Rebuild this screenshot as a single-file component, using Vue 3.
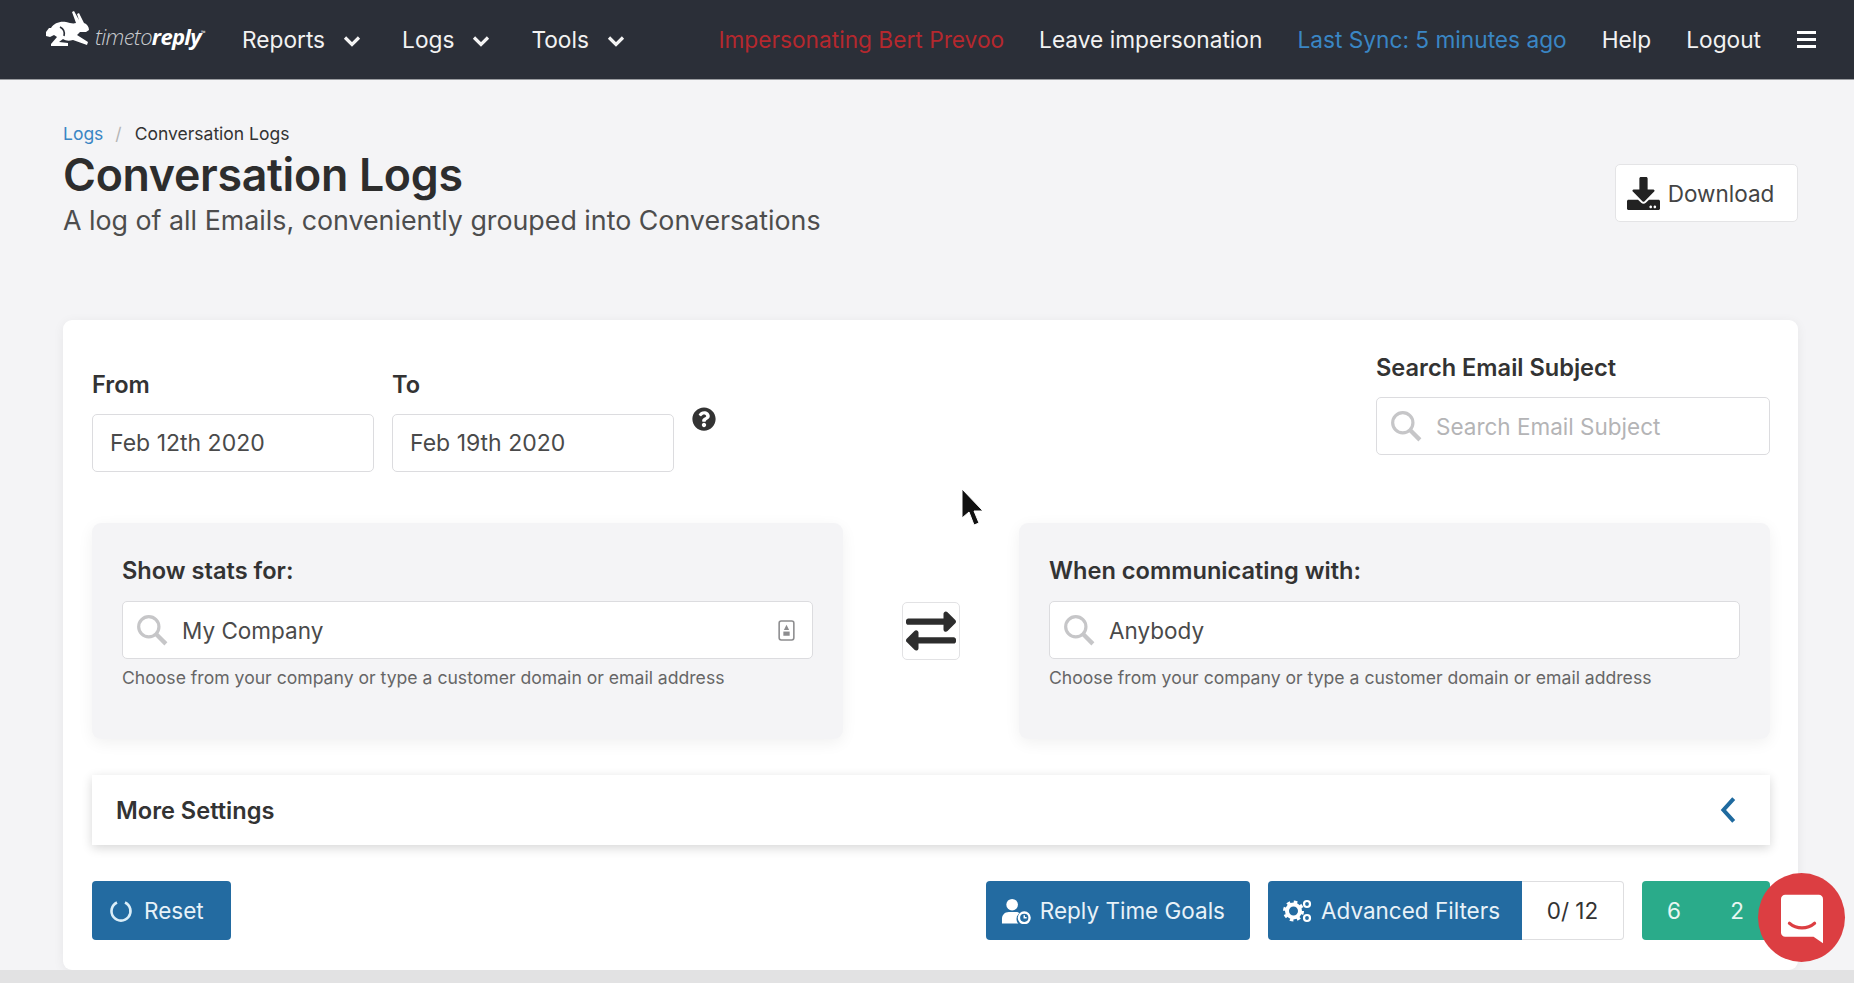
<template>
  <div class="page">
    <nav class="topbar">
      <a class="logo">
        <svg class="rabbit" viewBox="0 0 44 36">
          <path d="M0 21l3-4h2c3-5 9-7 15-6 4 1 7 2 10 1L26 1l2-1 5 9-2-6 2-1 5 10c3 1 5 4 5 7l-3 2h-6l-3 3 11 7-1 3-14-5c-4 1-7 1-10-1l-4 3 9 1v3H5v-2l6-7-3-2-4 2-4-1z" fill="#fff" />
          <path d="M14 16c4 2 5 5 4 9" fill="none" stroke="#2b2f38" stroke-width="1.600" />
        </svg>
        <span class="logo-text"><span class="thin">timeto</span><b>reply</b><sup>™</sup></span>
      </a>
      <ul class="menu">
        <li v-for="m in menus" :key="m">
          {{ m }}
          <svg class="chev" viewBox="0 0 18 12"><path d="M2 2.500l7 7 7-7" /></svg>
        </li>
      </ul>
      <div class="right-nav">
        <span class="imp">Impersonating Bert Prevoo</span>
        <span>Leave impersonation</span>
        <span class="sync">Last Sync: 5 minutes ago</span>
        <span>Help</span>
        <span>Logout</span>
        <span class="burger"><i></i><i></i><i></i></span>
      </div>
    </nav>

    <main class="content">
      <header class="head">
        <div>
          <div class="crumbs"><a>Logs</a><span class="sep">/</span><span>Conversation Logs</span></div>
          <h1>Conversation Logs</h1>
          <p class="sub">A log of all Emails, conveniently grouped into Conversations</p>
        </div>
        <button class="btn-download">
          <svg viewBox="0 0 512 512"><path d="M216 0h80c13.300 0 24 10.700 24 24v168h87.700c17.800 0 26.700 21.500 14.100 34.100L269.700 378.300c-7.500 7.500-19.800 7.500-27.300 0L90.100 226.100c-12.600-12.600-3.700-34.100 14.100-34.100H192V24c0-13.300 10.700-24 24-24zm296 376v112c0 13.300-10.700 24-24 24H24c-13.300 0-24-10.700-24-24V376c0-13.300 10.700-24 24-24h146.700l49 49c20.100 20.100 52.500 20.100 72.600 0l49-49H488c13.300 0 24 10.700 24 24zm-124 88c0-11-9-20-20-20s-20 9-20 20 9 20 20 20 20-9 20-20zm64 0c0-11-9-20-20-20s-20 9-20 20 9 20 20 20 20-9 20-20z" /></svg>
          Download
        </button>
      </header>

      <section class="card">
        <div class="filters">
          <div class="dates">
            <div class="field">
              <label>From</label>
              <div class="input date">Feb 12th 2020</div>
            </div>
            <div class="field">
              <label>To</label>
              <div class="input date">Feb 19th 2020</div>
            </div>
            <svg class="help" viewBox="0 0 512 512"><path d="M504 256c0 136.997-111.043 248-248 248S8 392.997 8 256C8 119.083 119.043 8 256 8s248 111.083 248 248zM262.655 90c-54.497 0-89.255 22.957-116.549 63.758-3.536 5.286-2.353 12.415 2.715 16.258l34.699 26.310c5.205 3.947 12.621 3.008 16.665-2.122 17.864-22.658 30.113-35.797 57.303-35.797 20.429 0 45.698 13.148 45.698 32.958 0 14.976-12.363 22.667-32.534 33.976C247.128 238.528 216 254.941 216 296v4c0 6.627 5.373 12 12 12h56c6.627 0 12-5.373 12-12v-1.333c0-28.462 83.186-29.647 83.186-106.667 0-58.002-60.165-102-116.531-102zM256 338c-25.365 0-46 20.635-46 46 0 25.364 20.635 46 46 46s46-20.636 46-46c0-25.365-20.635-46-46-46z" /></svg>
          </div>
          <div class="field subject">
            <label>Search Email Subject</label>
            <div class="input with-icon placeholder">
              <svg class="glass" viewBox="0 0 30 30"><circle cx="12" cy="12" r="9.500" /><path d="M19 19l9 9" /></svg>
              Search Email Subject
            </div>
          </div>
        </div>

        <div class="stats">
          <div class="box">
            <label>Show stats for:</label>
            <div class="input with-icon">
              <svg class="glass" viewBox="0 0 30 30"><circle cx="12" cy="12" r="9.500" /><path d="M19 19l9 9" /></svg>
              My Company
              <svg class="contact" viewBox="0 0 16 20">
                <rect x="1" y="1" width="14" height="18" rx="2" />
                <path d="M8 4.500l2.500 5h-5z" class="dot" />
                <rect x="5" y="11" width="6" height="4" class="dot" />
              </svg>
            </div>
            <p class="hint">Choose from your company or type a customer domain or email address</p>
          </div>
          <button class="swap">
            <svg viewBox="0 0 512 512"><path d="M0 168v-16c0-13.255 10.745-24 24-24h360V80c0-21.367 25.899-32.042 40.971-16.971l80 80c9.372 9.373 9.372 24.569 0 33.941l-80 80C409.956 271.982 384 261.456 384 240v-48H24c-13.255 0-24-10.745-24-24zm488 152H128v-48c0-21.314-25.862-32.080-40.971-16.971l-80 80c-9.372 9.373-9.372 24.569 0 33.941l80 80C102.057 463.997 128 453.437 128 432v-48h360c13.255 0 24-10.745 24-24v-16c0-13.255-10.745-24-24-24z" /></svg>
          </button>
          <div class="box">
            <label>When communicating with:</label>
            <div class="input with-icon">
              <svg class="glass" viewBox="0 0 30 30"><circle cx="12" cy="12" r="9.500" /><path d="M19 19l9 9" /></svg>
              Anybody
            </div>
            <p class="hint">Choose from your company or type a customer domain or email address</p>
          </div>
        </div>

        <div class="more">
          <span>More Settings</span>
          <svg viewBox="0 0 14 24"><path d="M12 2L3 12l9 10" /></svg>
        </div>

        <div class="actions">
          <button class="btn blue reset">
            <svg class="ico-reset" viewBox="0 0 24 24"><path d="M8 3.500a9.500 9.500 0 1 0 8 0" /></svg>
            Reset
          </button>
          <div class="actions-right">
            <button class="btn blue goals">
              <svg class="ico-goal" viewBox="0 0 32 26">
                <circle cx="11.500" cy="6.500" r="6" fill="#fff" />
                <path d="M1 26v-5c0-4 3-7 7-7h7c2 0 3 .5 4 1-2 2-3 4-3 6 0 2 .6 4 2 5z" fill="#fff" />
                <circle cx="24" cy="20" r="5.500" fill="none" stroke="#fff" stroke-width="2.500" />
                <path d="M24 17.500V20h2.500" fill="none" stroke="#fff" stroke-width="1.500" />
              </svg>
              Reply Time Goals
            </button>
            <div class="group">
              <button class="btn blue flat">
                <svg class="ico-gears" viewBox="0 0 30 26">
                  <circle cx="10.500" cy="13" r="6.500" fill="none" stroke="#fff" stroke-width="4" />
                  <circle cx="10.500" cy="13" r="9" fill="none" stroke="#fff" stroke-width="3" stroke-dasharray="3.500 3.570" />
                  <circle cx="24" cy="6" r="3" fill="none" stroke="#fff" stroke-width="2.200" />
                  <circle cx="24" cy="20" r="3" fill="none" stroke="#fff" stroke-width="2.200" />
                </svg>
                Advanced Filters
              </button>
              <div class="count">0/ 12</div>
            </div>
            <div class="green"><span>6</span><span>2</span></div>
          </div>
        </div>
      </section>
    </main>
    <div class="strip"></div>

    <!-- chat widget and the recorded mouse pointer lie over the page -->
    <div class="chat">
      <svg viewBox="0 0 40 46">
        <path d="M4 0h32a4 4 0 0 1 4 4v42l-9-6H4a4 4 0 0 1-4-4V4a4 4 0 0 1 4-4z" fill="#fff" />
        <path d="M8 27c7 6 17 6 24 0" fill="none" stroke="#dc3e42" stroke-width="3" stroke-linecap="round" />
      </svg>
    </div>
    <svg class="pointer" viewBox="0 0 24 40">
      <path d="M2 1v29l7-6 5 13 5-2-5-12h9z" fill="#111" stroke="#fff" stroke-width="1" />
    </svg>
  </div>
</template>

<script setup>
const menus = ['Reports', 'Logs', 'Tools']
</script>

<style>
html, body {
  margin: 0;
  height: 100%;
  overflow: hidden;
  background: #f4f4f6;
}
</style>

<style scoped>
.page {
  height: 983px;
  font-family: Inter, "Liberation Sans", sans-serif;
  color: #333;
  background: #f4f4f6;
  position: relative;
  overflow: hidden;
}
.topbar {
  height: 79px;
  background: #2b2f38;
  border-bottom: 1px solid #9a9ca0;
  display: flex;
  align-items: center;
  padding: 0 38px 0 46px;
  color: #f2f2f2;
  font-size: 22.700px;
}
.logo {
  display: flex;
  align-items: flex-start;
  align-self: flex-start;
  width: 196px;
  padding-top: 11px;
}
.rabbit {
  width: 44px;
  height: 36px;
  flex: none;
}
.logo-text {
  font-family: "Open Sans", sans-serif;
  font-style: italic;
  font-size: 22px;
  line-height: 26px;
  letter-spacing: -0.7px;
  margin-left: 5px;
  margin-top: 12px;
  color: #fff;
}
.logo-text .thin {
  font-weight: 300;
  color: #c9cbce;
}
.logo-text b {
  font-weight: 700;
}
.logo-text sup {
  font-size: 6px;
  line-height: 0;
  vertical-align: 10px;
  font-style: normal;
}
.menu {
  display: flex;
  list-style: none;
  margin: 0;
  padding: 0;
  gap: 41px;
}
.menu li {
  display: flex;
  align-items: center;
  gap: 18px;
}
.chev {
  width: 18px;
  height: 12px;
  margin-top: 3px;
}
.chev path {
  fill: none;
  stroke: #f4f4f4;
  stroke-width: 3.200;
}
.right-nav {
  margin-left: auto;
  display: flex;
  align-items: center;
  gap: 35px;
}
.imp {
  color: #b5282e;
}
.sync {
  color: #3a86c4;
}
.burger {
  display: flex;
  flex-direction: column;
  gap: 4px;
  width: 19px;
  margin-left: 1px;
}
.burger i {
  height: 3px;
  background: #fff;
}
.content {
  padding: 42px 56px 0 63px;
}
.head {
  display: flex;
  justify-content: space-between;
  align-items: flex-start;
  height: 198px;
}
.crumbs {
  font-size: 17.500px;
  line-height: 24px;
  display: flex;
}
.crumbs a {
  color: #3a86c4;
}
.sep {
  color: #b5b5b5;
  margin: 0 13px 0 12px;
}
h1 {
  margin: 3px 0 0;
  font-size: 44.700px;
  line-height: 52px;
  font-weight: 600;
  letter-spacing: -0.3px;
  color: #2d2d2d;
}
.sub {
  margin: 3px 0 0;
  font-size: 26.800px;
  line-height: 32px;
  color: #4d4d4d;
}
.btn-download {
  margin-top: 42px;
  width: 183px;
  height: 58px;
  padding-right: 18px;
  background: #fff;
  border: 1px solid #e4e4e6;
  border-radius: 5px;
  font: inherit;
  font-size: 22.500px;
  color: #444;
  display: flex;
  align-items: center;
  justify-content: center;
  gap: 8px;
}
.btn-download svg {
  width: 33px;
  height: 35px;
  fill: #222;
}
.card {
  background: #fff;
  border-radius: 9px;
  padding: 36px 28px 30px 29px;
  box-shadow: 0 2px 12px rgba(0, 0, 0, 0.06);
}
.filters {
  display: flex;
  justify-content: space-between;
  align-items: flex-start;
  height: 116px;
}
.dates {
  display: flex;
  gap: 18px;
  padding-top: 17px;
}
.field label,
.box label {
  display: block;
  font-size: 23.600px;
  line-height: 24px;
  font-weight: 600;
  color: #333;
}
.field label {
  margin-bottom: 17px;
}
.input {
  height: 58px;
  box-sizing: border-box;
  background: #fff;
  border: 1px solid #dcdcdf;
  border-radius: 5px;
  display: flex;
  align-items: center;
  font-size: 22.500px;
  color: #4a4a4a;
}
.date {
  width: 282px;
  padding-left: 17px;
  font-size: 23px;
}
.help {
  width: 24px;
  height: 24px;
  fill: #333;
  margin: 34px 0 0 0;
}
.subject {
  width: 394px;
}
.with-icon {
  padding-left: 13px;
}
.glass {
  width: 32px;
  height: 32px;
  margin-right: 14px;
  flex: none;
}
.glass circle,
.glass path {
  fill: none;
  stroke: #c6c6c8;
  stroke-width: 3;
}
.glass path {
  stroke-width: 4;
}
.placeholder {
  color: #b4b4b6;
}
.stats {
  display: flex;
  justify-content: space-between;
  align-items: flex-start;
  margin-top: 51px;
}
.box {
  width: 751px;
  height: 216px;
  box-sizing: border-box;
  background: #f4f4f6;
  border-radius: 9px;
  padding: 36px 30px 0;
  box-shadow: 0 4px 16px rgba(0, 0, 0, 0.06);
}
.box label {
  margin-bottom: 18px;
}
.contact {
  width: 17px;
  height: 21px;
  margin-left: auto;
  margin-right: 17px;
}
.contact rect {
  fill: none;
  stroke: #8d8d8f;
  stroke-width: 1.500;
}
.contact .dot {
  fill: #8d8d8f;
  stroke: none;
}
.hint {
  margin: 8px 0 0;
  font-size: 17.600px;
  line-height: 22px;
  color: #666;
}
.swap {
  width: 58px;
  height: 58px;
  margin-top: 79px;
  padding: 0;
  background: #fff;
  border: 1px solid #e2e2e4;
  border-radius: 5px;
  display: flex;
  align-items: center;
  justify-content: center;
}
.swap svg {
  width: 50px;
  height: 50px;
  fill: #2d2d2d;
}
.more {
  margin-top: 36px;
  height: 70px;
  box-sizing: border-box;
  padding: 0 32px 0 24px;
  background: #fff;
  display: flex;
  align-items: center;
  justify-content: space-between;
  font-size: 23.600px;
  font-weight: 600;
  box-shadow: 0 3px 10px rgba(0, 0, 0, 0.16);
}
.more svg {
  width: 16px;
  height: 28px;
  margin-right: 2px;
}
.more path {
  fill: none;
  stroke: #1f6a9f;
  stroke-width: 3.500;
}
.actions {
  margin-top: 36px;
  display: flex;
  justify-content: space-between;
}
.actions-right {
  display: flex;
  gap: 18px;
}
.btn {
  height: 59px;
  padding: 0 24px 0 17px;
  border: 0;
  border-radius: 4px;
  font: inherit;
  font-size: 22.500px;
  display: flex;
  align-items: center;
  gap: 11px;
}
.reset {
  padding-right: 27px;
}
.goals {
  padding-left: 15px;
  padding-right: 25px;
  gap: 8px;
}
.blue {
  background: #236ba1;
  color: #e8f2f8;
}
.ico-reset {
  width: 24px;
  height: 24px;
  flex: none;
}
.ico-reset path {
  fill: none;
  stroke: #dbeef8;
  stroke-width: 2.600;
}
.ico-goal {
  width: 31px;
  height: 26px;
}
.ico-gears {
  width: 30px;
  height: 26px;
}
.group {
  display: flex;
}
.flat {
  border-radius: 4px 0 0 4px;
  width: 254px;
  padding: 0 0 0 15px;
  gap: 8px;
}
.count {
  width: 102px;
  height: 59px;
  box-sizing: border-box;
  border: 1px solid #dedee0;
  border-left: 0;
  border-radius: 0 4px 4px 0;
  display: flex;
  align-items: center;
  justify-content: center;
  font-size: 22.500px;
}
.green {
  width: 128px;
  height: 59px;
  box-sizing: border-box;
  background: #2aab8a;
  border-radius: 4px;
  color: #e8f6f2;
  font-size: 22.500px;
  display: flex;
  align-items: center;
  justify-content: space-between;
  padding: 0 26px 0 25px;
}
.strip {
  height: 20px;
  background: #e2e2e3;
}
.chat {
  position: absolute;
  left: 1758px;
  top: 873px;
  width: 87px;
  height: 89px;
  border-radius: 50%;
  background: #dc3e42;
  display: flex;
  align-items: center;
  justify-content: center;
}
.chat svg {
  width: 42px;
  height: 50px;
  margin-top: 3px;
}
.pointer {
  position: absolute;
  left: 960px;
  top: 488px;
  width: 24px;
  height: 40px;
}
</style>
